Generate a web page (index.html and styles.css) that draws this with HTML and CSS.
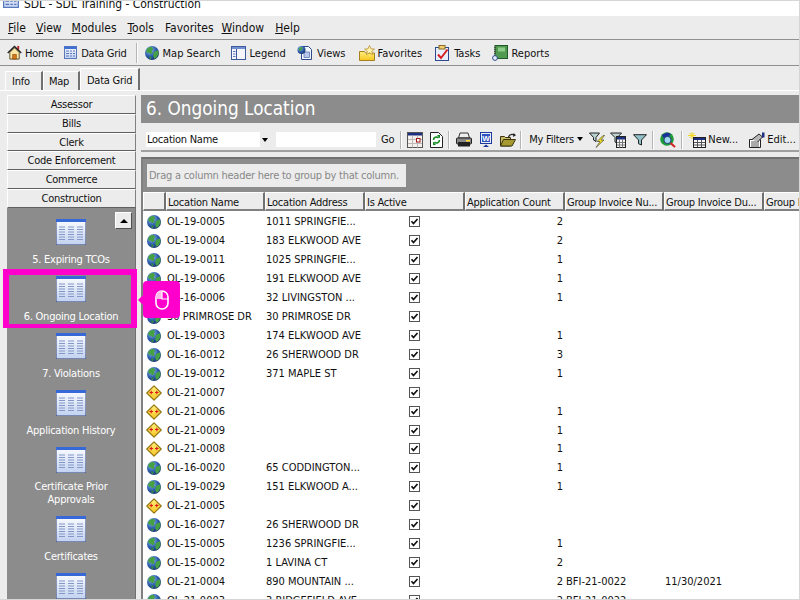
FILE: index.html
```html
<!DOCTYPE html>
<html lang="en">
<head>
  <meta charset="UTF-8" />
  <title>SDL - SDL Training - Construction</title>
  <link rel="stylesheet" href="styles.css">
</head>
<body>
  <svg class="sprite" xmlns="http://www.w3.org/2000/svg">
    <defs>
      <radialGradient id="sea" cx="35%" cy="30%" r="75%"><stop offset="0" stop-color="#9fc0f0"/><stop offset="0.55" stop-color="#2f62b0"/><stop offset="1" stop-color="#1a3670"/></radialGradient>
      <linearGradient id="sheet" x1="0" y1="0" x2="0" y2="1"><stop offset="0" stop-color="#f6f8fe"/><stop offset="1" stop-color="#c2d2f0"/></linearGradient>
      <linearGradient id="gold" x1="0" y1="0" x2="0" y2="1"><stop offset="0" stop-color="#fff080"/><stop offset="1" stop-color="#f6c420"/></linearGradient>
      <symbol id="globe" viewBox="0 0 14 14">
        <circle cx="7" cy="7" r="7" fill="url(#sea)"/>
        <path d="M3 1.800 6.500 .8 8.200 3 6.800 5 7.800 6.800 5.500 8.300 3.600 6.400 1.800 6.800 1 4.600Z" fill="#46a044"/>
        <path d="M9 6 12.800 4.300 13.600 7.500 11.600 11.200 9.400 12.800 8.200 9.800Z" fill="#46a044"/>
        <path d="M4.500 10 6.500 11 6 13.300 4.400 12.400Z" fill="#358a3c"/>
      </symbol>
      <symbol id="warn" viewBox="0 0 16 16">
        <path d="M8 .8 15.200 8 8 15.200.8 8Z" fill="url(#gold)" stroke="#94760c" stroke-width="1.200" stroke-linejoin="round"/>
        <path d="M3.500 7.500h3.500M5.200 5.800v3.500M9 7.500h3.500M10.800 5.800v3.500" stroke="#e01818" stroke-width="1.100" fill="none"/>
      </symbol>
      <symbol id="grid-big" viewBox="0 0 30 26">
        <rect width="30" height="26" fill="#2f3f7a"/>
        <rect x="0" y="0" width="30" height="3" fill="#3768d8"/>
        <rect x="0.5" y="3" width="29" height="22.5" fill="url(#sheet)"/>
        <path d="M3 8h6M3 10.500h6M3 13h6M3 15.500h6M3 18h6M3 20.500h6M12 8h6M12 10.500h6M12 13h6M12 15.500h6M12 18h6M12 20.500h6M21 8h6M21 10.500h6M21 13h6M21 15.500h6M21 18h6M21 20.500h6" stroke="#8498c8" stroke-width="1" fill="none"/>
      </symbol>
      <symbol id="grid-small" viewBox="0 0 13 13">
        <rect x=".5" y=".5" width="12" height="12" fill="url(#sheet)" stroke="#5a78bc"/>
        <rect x=".5" y=".5" width="12" height="2.500" fill="#3f6fd0"/>
        <path d="M2 5h3M6 5h2M9 5h2M2 7.500h3M6 7.500h2M9 7.500h2M2 10h3M6 10h2M9 10h2" stroke="#5a78bc" fill="none"/>
      </symbol>
      <symbol id="home" viewBox="0 0 16 16">
        <path d="M11 1h2v4h-2Z" fill="#c02020"/>
        <path d="M3 8v7h10V8L8 3Z" fill="#fbe9a8" stroke="#5a4a20"/>
        <path d="M.8 8.500 8 1.500l7.200 7" fill="none" stroke="#222" stroke-width="1.500"/>
        <path d="M6 10h4v5H6Z" fill="#d87818" stroke="#7a3a08" stroke-width=".6"/>
      </symbol>
      <symbol id="legend" viewBox="0 0 15 14">
        <rect x=".5" y=".5" width="14" height="13" fill="#f4f6fc" stroke="#3f5a9c"/>
        <rect x="1" y="1" width="13" height="2" fill="#6f8fd0"/>
        <path d="M5.500 3v10" stroke="#3f5a9c"/>
        <path d="M2 5.500h2.500M2 8h2.500M2 10.500h2.500" stroke="#5a78bc"/>
      </symbol>
      <symbol id="views" viewBox="0 0 16 16">
        <path d="M4.500 1.500h7l3 3v10h-10Z" fill="#f4f7fd" stroke="#2f4a8c"/>
        <rect x="7" y="7" width="5.500" height="5.500" fill="#b8c8ea" stroke="#4a68ac" stroke-width=".7"/>
        <circle cx="4.500" cy="5" r="4" fill="url(#sea)"/>
        <path d="M2.500 2.500 5 2 5.500 4 3.500 6 1.500 4.500Z" fill="#46a044"/>
      </symbol>
      <symbol id="fav" viewBox="0 0 16 16">
        <path d="M.5 6.500h5l1 1.500h9v7.500H.5Z" fill="url(#gold)" stroke="#a88020"/>
        <path d="M10.500.5 12 3.800l3.500.3-2.700 2.200.9 3.400-3.200-1.900-3 1.900.8-3.400L5.600 4.100 9 3.800Z" fill="#fff3b0" stroke="#b89030" stroke-width=".8"/>
      </symbol>
      <symbol id="tasks" viewBox="0 0 14 16">
        <rect x=".5" y="2.500" width="13" height="13" fill="#e8eefb" stroke="#2f4a8c"/>
        <rect x="4" y=".5" width="6" height="3.500" fill="#f0d070" stroke="#8a6a20"/>
        <path d="M3 9.500 6 13 12.500 4.500" fill="none" stroke="#d82020" stroke-width="2"/>
      </symbol>
      <symbol id="reports" viewBox="0 0 16 16">
        <rect x="3" y=".5" width="12.500" height="13" fill="#4f9a50" stroke="#1f5a28"/>
        <rect x="6" y="2.500" width="7" height="4" fill="#8ccb88"/>
        <path d="M3 2v9" stroke="#444" stroke-width="1.500" stroke-dasharray="1 1"/>
        <circle cx="3" cy="13" r="2.400" fill="#e8eefb" stroke="#2f4a8c"/>
      </symbol>
      <symbol id="calendar" viewBox="0 0 16 16">
        <rect x=".5" y=".5" width="15" height="15" fill="#f4f0ec" stroke="#555"/>
        <rect x="1" y="1" width="14" height="2.500" fill="#1c2f80"/>
        <path d="M5.500 3.500v12M10.500 3.500v12M1 7.500h14M1 11.500h14" stroke="#bbb"/>
        <rect x="9.500" y="6.500" width="3.500" height="3.500" fill="#fff" stroke="#a01818"/>
      </symbol>
      <symbol id="refresh" viewBox="0 0 13 16">
        <path d="M.5.500h8l4 4v11H.5Z" fill="#fff" stroke="#222"/>
        <path d="M3.500 8a3 3 0 0 1 5-2.200M9.500 8a3 3 0 0 1-5 2.200" fill="none" stroke="#108a20" stroke-width="1.600"/>
        <path d="M7 3h3v3.500ZM6 13H3V9.500Z" fill="#108a20"/>
      </symbol>
      <symbol id="printer" viewBox="0 0 16 15">
        <path d="M4 1h8l1.500 5h-11Z" fill="#eee" stroke="#333"/>
        <rect x=".5" y="6" width="15" height="6" rx="1" fill="#888" stroke="#222"/>
        <rect x="2" y="10" width="12" height="4.500" fill="#222"/>
        <rect x="10" y="8" width="4" height="1.500" fill="#ffe040"/>
      </symbol>
      <symbol id="word" viewBox="0 0 12 16">
        <rect x=".5" y=".5" width="11" height="11" fill="#e8eefb" stroke="#1c3a9c"/>
        <rect x="2" y="2" width="8" height="8" fill="#2f54c0"/>
        <text x="6" y="9" font-size="8" font-weight="700" font-family="Liberation Sans" fill="#fff" text-anchor="middle">W</text>
        <path d="M3 15h6L6 12.500Z" fill="#1c3a9c"/>
      </symbol>
      <symbol id="folder" viewBox="0 0 16 14">
        <path d="M.5 3.500h4l1 1h5v8.500h-10Z" fill="#c8b860" stroke="#3a3410"/>
        <path d="M.5 13 3.500 6.500h12L12 13Z" fill="#a89830" stroke="#3a3410"/>
        <path d="M8.500 4C9.500 1.500 12 1 14.500 2" fill="none" stroke="#222" stroke-width="1.200"/>
        <path d="M13.500 0 16 2.200 13 4Z" fill="#222"/>
      </symbol>
      <symbol id="filter-bolt" viewBox="0 0 16 16">
        <path d="M.5 1h10L7 5.500v4L4.500 8V5.500Z" fill="#b8d0d0" stroke="#222"/>
        <path d="M14 3.500 8 9.500h3L7 15.500l8-7.500h-3L15.500 3.500Z" fill="#f4e420" stroke="#333" stroke-width=".6"/>
      </symbol>
      <symbol id="filter-grid" viewBox="0 0 16 16">
        <path d="M.5 1h11L7.500 5.500v6L5 10V5.500Z" fill="#c0d0d0" stroke="#222"/>
        <rect x="6.500" y="4.500" width="9" height="11" fill="#f4f4f4" stroke="#222"/>
        <rect x="7" y="5" width="8" height="2.500" fill="#1c2f80"/>
        <path d="M9.500 7.500v8M12.500 7.500v8M7 10.500h8M7 13h8" stroke="#777"/>
      </symbol>
      <symbol id="filter" viewBox="0 0 14 12">
        <path d="M.5.700h13L8.500 6v5L5.500 9.700V6Z" fill="#90c0c8" stroke="#222"/>
      </symbol>
      <symbol id="globe-search" viewBox="0 0 16 16">
        <circle cx="7" cy="7" r="6.800" fill="#1f9a38"/>
        <path d="M2 3 7 .5 11 2 8 5 3.500 6Z" fill="#1c2f9c"/>
        <circle cx="7.500" cy="8" r="3.600" fill="#9fd8f0" stroke="#1c3a78"/>
        <path d="M10.500 11 15 15" stroke="#d02020" stroke-width="2"/>
      </symbol>
      <symbol id="new" viewBox="0 0 18 16">
        <path d="M4 0v7M0 3.500h8M1.500 1l5 5M6.500 1l-5 5" stroke="#f0d820" stroke-width="1"/>
        <rect x="5.500" y="5.500" width="12" height="10" fill="#f8f8f8" stroke="#222"/>
        <rect x="6" y="6" width="11" height="2" fill="#1c2f80"/>
        <path d="M9.500 8v7M13.500 8v7M6 10.500h11M6 13h11" stroke="#555"/>
      </symbol>
      <symbol id="edit" viewBox="0 0 16 16">
        <path d="M.5 7.500h11v8H.5Z" fill="#fff" stroke="#222"/>
        <path d="M2 10h8M2 12h8M2 14h8" stroke="#555"/>
        <path d="M3 7.500 10 2l3.500 3-5 5" fill="#b8b8b8" stroke="#222"/>
        <rect x="13" y=".5" width="2.500" height="5" fill="#1c2f80"/>
      </symbol>
      <symbol id="check" viewBox="0 0 11 11">
        <rect x=".5" y=".5" width="10" height="10" fill="#fff" stroke="#555"/>
        <path d="M2.500 5.200 4.500 7.500 8.500 3" fill="none" stroke="#111" stroke-width="1.700"/>
      </symbol>
    </defs>
  </svg>

  <div class="app">
    <div class="titlebar">
      <svg class="title-icon" width="16" height="16"><use href="#grid-small"/></svg>
      <span>SDL - SDL Training - Construction</span>
    </div>

    <div class="menubar">
      <span><u>F</u>ile</span>
      <span><u>V</u>iew</span>
      <span><u>M</u>odules</span>
      <span class="menu-tools"><u>T</u>ools</span>
      <span class="menu-fav">Favorites</span>
      <span class="menu-win"><u>W</u>indow</span>
      <span><u>H</u>elp</span>
    </div>

    <div class="toolbar">
      <div class="tool tool-home"><svg width="15" height="15"><use href="#home"/></svg><span>Home</span></div>
      <div class="tool tool-grid"><svg width="13" height="13"><use href="#grid-small"/></svg><span>Data Grid</span></div>
      <div class="sep"></div>
      <div class="tool tool-map"><svg width="14" height="14"><use href="#globe"/></svg><span>Map Search</span></div>
      <div class="tool tool-legend"><svg width="15" height="14"><use href="#legend"/></svg><span>Legend</span></div>
      <div class="tool tool-views"><svg width="16" height="16"><use href="#views"/></svg><span>Views</span></div>
      <div class="tool tool-fav"><svg width="16" height="16"><use href="#fav"/></svg><span>Favorites</span></div>
      <div class="tool tool-tasks"><svg width="14" height="16"><use href="#tasks"/></svg><span>Tasks</span></div>
      <div class="tool tool-reports"><svg width="16" height="16"><use href="#reports"/></svg><span>Reports</span></div>
    </div>

    <div class="tabs">
      <div class="tab tab-info">Info</div>
      <div class="tab tab-map">Map</div>
      <div class="tab tab-active">Data Grid</div>
    </div>

    <div class="workspace">
      <aside class="sidebar">
        <div class="group-btn">Assessor</div>
        <div class="group-btn">Bills</div>
        <div class="group-btn group-btn-short">Clerk</div>
        <div class="group-btn">Code Enforcement</div>
        <div class="group-btn">Commerce</div>
        <div class="group-btn">Construction</div>
        <div class="group-body">
          <button class="scroll-up"><span class="arrow-up"></span></button>
          <div class="nav-item"><svg width="30" height="26"><use href="#grid-big"/></svg><div>5. Expiring TCOs</div></div>
          <div class="nav-item"><svg width="30" height="26"><use href="#grid-big"/></svg><div>6. Ongoing Location</div></div>
          <div class="nav-item"><svg width="30" height="26"><use href="#grid-big"/></svg><div>7. Violations</div></div>
          <div class="nav-item"><svg width="30" height="26"><use href="#grid-big"/></svg><div>Application History</div></div>
          <div class="nav-item nav-item-tall"><svg width="30" height="26"><use href="#grid-big"/></svg><div>Certificate Prior<br>Approvals</div></div>
          <div class="nav-item"><svg width="30" height="26"><use href="#grid-big"/></svg><div>Certificates</div></div>
          <div class="nav-item"><svg width="30" height="26"><use href="#grid-big"/></svg></div>
        </div>
      </aside>

      <main class="content">
        <h1 class="page-title">6. Ongoing Location</h1>

        <div class="grid-toolbar">
          <div class="combo"><span>Location Name</span><div class="combo-btn"><span class="arrow-down"></span></div></div>
          <div class="search-box"></div>
          <span class="go">Go</span>
          <div class="sep"></div>
          <svg class="ic-cal" width="16" height="16"><use href="#calendar"/></svg>
          <svg class="ic-ref" width="13" height="16"><use href="#refresh"/></svg>
          <div class="sep sep-a"></div>
          <svg class="ic-print" width="16" height="15"><use href="#printer"/></svg>
          <svg class="ic-word" width="12" height="16"><use href="#word"/></svg>
          <svg class="ic-folder" width="16" height="14"><use href="#folder"/></svg>
          <div class="sep sep-b"></div>
          <span class="my-filters">My Filters<span class="arrow-down"></span></span>
          <svg class="ic-fbolt" width="16" height="16"><use href="#filter-bolt"/></svg>
          <svg class="ic-fgrid" width="16" height="16"><use href="#filter-grid"/></svg>
          <svg class="ic-filter" width="14" height="12"><use href="#filter"/></svg>
          <div class="sep sep-c"></div>
          <svg class="ic-gsearch" width="16" height="16"><use href="#globe-search"/></svg>
          <div class="sep sep-d"></div>
          <svg class="ic-new" width="18" height="16"><use href="#new"/></svg>
          <span class="tb-label">New...</span>
          <svg class="ic-edit" width="16" height="16"><use href="#edit"/></svg>
          <span class="tb-label">Edit...</span>
        </div>

        <div class="datagrid">
          <div class="group-panel"><div class="group-hint">Drag a column header here to group by that column.</div></div>
          <div class="row head">
            <div></div>
            <div>Location Name</div>
            <div>Location Address</div>
            <div>Is Active</div>
            <div>Application Count</div>
            <div>Group Invoice Nu...</div>
            <div>Group Invoice Du...</div>
            <div>Group Invoice</div>
          </div>
          <div class="row"><svg class="ic" width="14" height="14"><use href="#globe"/></svg><div>OL-19-0005</div><div>1011 SPRINGFIE...</div><svg class="cb" width="11" height="11"><use href="#check"/></svg><div class="num">2</div><div></div><div></div><div></div></div>
          <div class="row"><svg class="ic" width="14" height="14"><use href="#globe"/></svg><div>OL-19-0004</div><div>183 ELKWOOD AVE</div><svg class="cb" width="11" height="11"><use href="#check"/></svg><div class="num">2</div><div></div><div></div><div></div></div>
          <div class="row"><svg class="ic" width="14" height="14"><use href="#globe"/></svg><div>OL-19-0011</div><div>1025 SPRINGFIE...</div><svg class="cb" width="11" height="11"><use href="#check"/></svg><div class="num">1</div><div></div><div></div><div></div></div>
          <div class="row"><svg class="ic" width="14" height="14"><use href="#globe"/></svg><div>OL-19-0006</div><div>191 ELKWOOD AVE</div><svg class="cb" width="11" height="11"><use href="#check"/></svg><div class="num">1</div><div></div><div></div><div></div></div>
          <div class="row"><svg class="ic" width="14" height="14"><use href="#globe"/></svg><div>OL-16-0006</div><div>32 LIVINGSTON ...</div><svg class="cb" width="11" height="11"><use href="#check"/></svg><div class="num">1</div><div></div><div></div><div></div></div>
          <div class="row"><svg class="ic" width="14" height="14"><use href="#globe"/></svg><div>30 PRIMROSE DR</div><div>30 PRIMROSE DR</div><svg class="cb" width="11" height="11"><use href="#check"/></svg><div class="num"></div><div></div><div></div><div></div></div>
          <div class="row"><svg class="ic" width="14" height="14"><use href="#globe"/></svg><div>OL-19-0003</div><div>174 ELKWOOD AVE</div><svg class="cb" width="11" height="11"><use href="#check"/></svg><div class="num">1</div><div></div><div></div><div></div></div>
          <div class="row"><svg class="ic" width="14" height="14"><use href="#globe"/></svg><div>OL-16-0012</div><div>26 SHERWOOD DR</div><svg class="cb" width="11" height="11"><use href="#check"/></svg><div class="num">3</div><div></div><div></div><div></div></div>
          <div class="row"><svg class="ic" width="14" height="14"><use href="#globe"/></svg><div>OL-19-0012</div><div>371 MAPLE ST</div><svg class="cb" width="11" height="11"><use href="#check"/></svg><div class="num">1</div><div></div><div></div><div></div></div>
          <div class="row"><svg class="ic ic-warn" width="16" height="16"><use href="#warn"/></svg><div>OL-21-0007</div><div></div><svg class="cb" width="11" height="11"><use href="#check"/></svg><div class="num"></div><div></div><div></div><div></div></div>
          <div class="row"><svg class="ic ic-warn" width="16" height="16"><use href="#warn"/></svg><div>OL-21-0006</div><div></div><svg class="cb" width="11" height="11"><use href="#check"/></svg><div class="num">1</div><div></div><div></div><div></div></div>
          <div class="row row-short"><svg class="ic ic-warn" width="16" height="16"><use href="#warn"/></svg><div>OL-21-0009</div><div></div><svg class="cb" width="11" height="11"><use href="#check"/></svg><div class="num">1</div><div></div><div></div><div></div></div>
          <div class="row"><svg class="ic ic-warn" width="16" height="16"><use href="#warn"/></svg><div>OL-21-0008</div><div></div><svg class="cb" width="11" height="11"><use href="#check"/></svg><div class="num">1</div><div></div><div></div><div></div></div>
          <div class="row"><svg class="ic" width="14" height="14"><use href="#globe"/></svg><div>OL-16-0020</div><div>65 CODDINGTON...</div><svg class="cb" width="11" height="11"><use href="#check"/></svg><div class="num">1</div><div></div><div></div><div></div></div>
          <div class="row"><svg class="ic" width="14" height="14"><use href="#globe"/></svg><div>OL-19-0029</div><div>151 ELKWOOD A...</div><svg class="cb" width="11" height="11"><use href="#check"/></svg><div class="num">1</div><div></div><div></div><div></div></div>
          <div class="row"><svg class="ic ic-warn" width="16" height="16"><use href="#warn"/></svg><div>OL-21-0005</div><div></div><svg class="cb" width="11" height="11"><use href="#check"/></svg><div class="num"></div><div></div><div></div><div></div></div>
          <div class="row"><svg class="ic" width="14" height="14"><use href="#globe"/></svg><div>OL-16-0027</div><div>26 SHERWOOD DR</div><svg class="cb" width="11" height="11"><use href="#check"/></svg><div class="num"></div><div></div><div></div><div></div></div>
          <div class="row"><svg class="ic" width="14" height="14"><use href="#globe"/></svg><div>OL-15-0005</div><div>1236 SPRINGFIE...</div><svg class="cb" width="11" height="11"><use href="#check"/></svg><div class="num">1</div><div></div><div></div><div></div></div>
          <div class="row"><svg class="ic" width="14" height="14"><use href="#globe"/></svg><div>OL-15-0002</div><div>1 LAVINA CT</div><svg class="cb" width="11" height="11"><use href="#check"/></svg><div class="num">2</div><div></div><div></div><div></div></div>
          <div class="row"><svg class="ic" width="14" height="14"><use href="#globe"/></svg><div>OL-21-0004</div><div>890 MOUNTAIN ...</div><svg class="cb" width="11" height="11"><use href="#check"/></svg><div class="num">2</div><div>BFI-21-0022</div><div>11/30/2021</div><div></div></div>
          <div class="row"><svg class="ic" width="14" height="14"><use href="#globe"/></svg><div>OL-21-0003</div><div>3 RIDGEFIELD AVE</div><svg class="cb" width="11" height="11"><use href="#check"/></svg><div class="num">2</div><div>BFI-21-0022</div><div></div><div></div></div>
        </div>
      </main>
    </div>

    <!-- callout drawn over the sidebar -->
    <div class="highlight"></div>
    <div class="callout">
      <svg width="14" height="20" viewBox="0 0 14 20">
        <rect x="1" y="1" width="12" height="18" rx="6" fill="none" stroke="#fff" stroke-width="1.600"/>
        <path d="M7 1v8H1V7a6 6 0 0 1 6-6Z" fill="#ffb8ec"/>
        <path d="M7 1v8H13" fill="none" stroke="#fff" stroke-width="1.200"/>
      </svg>
    </div>
  </div>
</body>
</html>
```

FILE: styles.css
```css
* {
  box-sizing: border-box;
}

html, body {
  margin: 0;
  height: 600px;
  overflow: hidden;
}

body {
  font-family: "DejaVu Sans Condensed", "DejaVu Sans", sans-serif;
  font-stretch: condensed;
  font-size: 11px;
  letter-spacing: -0.25px;
  color: #111;
  background: #ececec;
}

.sprite {
  display: block;
  width: 0;
  height: 0;
}

.app {
  position: relative;
  width: 800px;
  height: 600px;
  overflow: hidden;
  border-top: 1px solid #d6d6d6;
  border-right: 1px solid #d6d6d6;
  border-bottom: 1px solid #d6d6d6;
}

/* title bar is cut off by the top of the shot */
.titlebar {
  height: 15px;
  background: #fff;
  display: flex;
  align-items: flex-end;
  overflow: hidden;
  font-size: 12px;
  letter-spacing: -0.05px;
  line-height: 14px;
  padding: 0 0 5px 3px;
}

.titlebar span {
  margin-left: 5px;
}

.title-icon {
  flex: none;
  margin-bottom: 3px;
}

.menubar {
  height: 24px;
  display: flex;
  align-items: center;
  gap: 10px;
  padding-left: 8px;
  font-size: 12px;
  letter-spacing: 0;
  border-bottom: 1px solid #909090;
}

.menu-tools { margin-left: 1px; }
.menu-fav { margin-left: 1px; }
.menu-win { margin-left: -2px; margin-right: 1px; }

.toolbar {
  height: 26px;
  display: flex;
  align-items: center;
  letter-spacing: 0;
  border-bottom: 1px solid #909090;
}

.tool {
  display: flex;
  align-items: center;
  gap: 4px;
  white-space: nowrap;
}

.tool span {
  padding-top: 2px;
}

.tool-home { margin-left: 7px; gap: 3px; letter-spacing: -0.25px; }
.tool-grid { margin-left: 11px; letter-spacing: -0.25px; }
.toolbar .sep { margin-left: 9px; height: 20px; }
.tool-map { margin-left: 7px; }
.tool-legend { margin-left: 10px; }
.tool-views { margin-left: 11px; }
.tool-fav { margin-left: 13px; gap: 3px; }
.tool-tasks { margin-left: 13px; gap: 5px; }
.tool-reports { margin-left: 12px; gap: 3px; }

.sep {
  flex: none;
  width: 2px;
  height: 18px;
  background: #b4b4b4;
  border-right: 1px solid #fff;
}

.tabs {
  height: 25px;
  display: flex;
  align-items: flex-end;
  padding-left: 5px;
  border-bottom: 1px solid #fff;
}

.tab {
  height: 19px;
  line-height: 20px;
  padding-left: 6px;
  border-top: 1px solid #fff;
  border-left: 1px solid #fff;
  border-right: 2px solid #707070;
}

.tab-info { width: 38px; }
.tab-map { width: 37px; padding-left: 5px; }

.tab-active {
  width: 60px;
  height: 22px;
  line-height: 23px;
  background: #f0f0f0;
}

.workspace {
  display: flex;
  height: 510px;
  padding: 4px 0 0 7px;
  overflow: hidden;
}

.sidebar {
  flex: none;
  width: 129px;
  margin-right: 5px;
  display: flex;
  flex-direction: column;
}

.group-btn {
  flex: none;
  height: 19px;
  line-height: 17px;
  text-align: center;
  background: #ececec;
  border-top: 1px solid #fff;
  border-left: 1px solid #fff;
  border-right: 1px solid #808080;
  border-bottom: 1px solid #606060;
}

.group-btn-short {
  height: 18px;
}

.group-body {
  position: relative;
  flex: 1;
  background: #8c8c8c;
  border-right: 1px solid #707070;
  color: #fff;
  text-align: center;
  padding-top: 11px;
}

.scroll-up {
  position: absolute;
  top: 4px;
  left: 108px;
  width: 17px;
  height: 17px;
  padding: 0;
  background: #ececec;
  border: 1px solid;
  border-color: #fff #505050 #505050 #fff;
  display: flex;
  align-items: center;
  justify-content: center;
}

.arrow-up {
  border: 4px solid transparent;
  border-top: 0;
  border-bottom: 4px solid #000;
}

.arrow-down {
  display: inline-block;
  border: 3px solid transparent;
  border-bottom: 0;
  border-top: 4px solid #000;
}

.nav-item {
  height: 57px;
}

.nav-item svg {
  display: block;
  margin: 0 auto 8px;
}

.nav-item div {
  line-height: 13px;
}

.nav-item-tall {
  height: 69px;
}

.nav-item-tall svg {
  margin-bottom: 7px;
}

.content {
  flex: none;
  width: 660px;
  overflow: hidden;
}

.page-title {
  margin: 0;
  height: 28px;
  padding-left: 5px;
  line-height: 28px;
  font-size: 18.8px;
  font-weight: 400;
  letter-spacing: 0;
  color: #fff;
  background: #8c8c8c;
}

.grid-toolbar {
  height: 25px;
  margin-top: 4px;
  padding: 2px 0 0 5px;
  display: flex;
  align-items: center;
  white-space: nowrap;
  border-bottom: 2px solid #a0a0a0;
  background: #ececec;
}

.combo {
  flex: none;
  width: 124px;
  height: 15px;
  background: #fff;
  display: flex;
  justify-content: space-between;
  line-height: 15px;
  padding-left: 1px;
}

.combo-btn {
  width: 10px;
  background: #ececec;
  display: flex;
  align-items: center;
  justify-content: center;
}

.search-box {
  flex: none;
  width: 100px;
  height: 15px;
  margin-left: 6px;
  background: #fff;
}

.go { margin-left: 5px; }
.grid-toolbar .sep { margin-left: 6px; }

.ic-cal { margin-left: 5px; flex: none; }
.ic-ref { margin-left: 7px; flex: none; }
.grid-toolbar .sep-a { margin-left: 5px; }
.ic-print { margin-left: 6px; flex: none; }
.ic-word { margin-left: 8px; flex: none; }
.ic-folder { margin-left: 8px; flex: none; }
.grid-toolbar .sep-b { margin-left: 4px; }

.my-filters {
  margin-left: 7px;
  width: 54px;
  flex: none;
}

.my-filters .arrow-down {
  margin-left: 3px;
  vertical-align: 2px;
}

.ic-fbolt { margin-left: 6px; flex: none; }
.ic-fgrid { margin-left: 5px; flex: none; }
.ic-filter { margin-left: 7px; flex: none; }
.grid-toolbar .sep-c { margin-left: 5px; }
.ic-gsearch { margin-left: 6px; flex: none; }
.grid-toolbar .sep-d { margin-left: 5px; }
.ic-new { margin-left: 5px; flex: none; }
.tb-label { margin-left: 2px; letter-spacing: 0; }
.ic-edit { margin-left: 11px; flex: none; }

.datagrid {
  margin-top: 5px;
  border-top: 2px solid #707070;
  border-left: 2px solid #808080;
  background: #fff;
}

.group-panel {
  height: 33px;
  background: #8c8c8c;
  padding: 5px 0 0 4px;
}

.group-hint {
  width: 259px;
  height: 23px;
  line-height: 24px;
  padding-left: 2px;
  color: #888;
  background: #ececec;
  white-space: nowrap;
  overflow: hidden;
}

.row {
  display: grid;
  grid-template-columns: 23px 99px 100px 100px 100px 99px 100px 100px;
  height: 19px;
  line-height: 19px;
  align-items: center;
  white-space: nowrap;
  letter-spacing: 0;
}

.row-short {
  height: 18px;
}

.row > div {
  padding-left: 1px;
  overflow: hidden;
}

.head {
  height: 20px;
  align-items: start;
  letter-spacing: -0.25px;
}

.head > div {
  height: 19px;
  line-height: 19px;
  background: #ececec;
  border-top: 1px solid #fff;
  border-left: 1px solid #fff;
  border-right: 2px solid #707070;
  border-bottom: 2px solid #808080;
}

.ic {
  margin-left: 4px;
}

.ic-warn {
  margin-left: 3px;
}

.cb {
  justify-self: center;
  margin-right: 2px;
}

.row > .num {
  text-align: right;
  padding-right: 2px;
}

.highlight {
  position: absolute;
  left: 3px;
  top: 268px;
  width: 134px;
  height: 59px;
  border: 6px solid #ff00cc;
  border-bottom-width: 4px;
}

.callout {
  position: absolute;
  left: 143px;
  top: 280px;
  width: 37px;
  height: 37px;
  background: #ff00cc;
  border-radius: 4px;
  display: flex;
  align-items: center;
  justify-content: center;
}

.callout::before {
  content: "";
  position: absolute;
  left: -5px;
  top: 14px;
  border: 5px solid transparent;
  border-left: 0;
  border-right-color: #ff00cc;
}
```
